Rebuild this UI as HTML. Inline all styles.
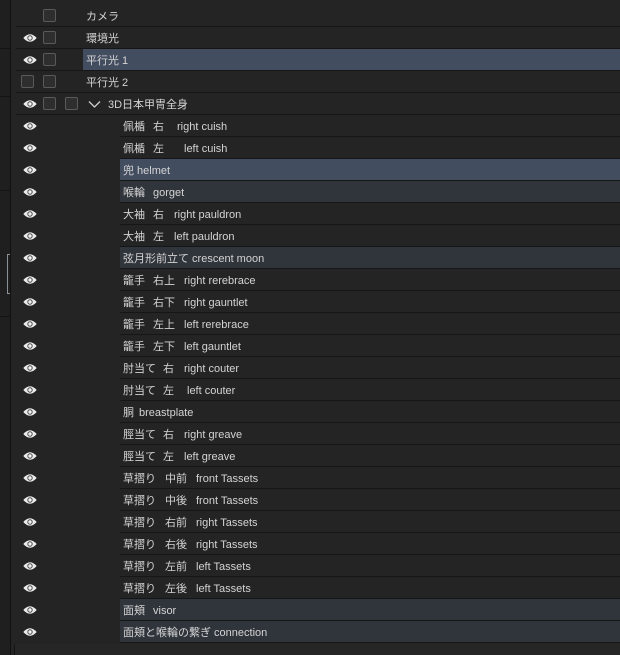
<!DOCTYPE html>
<html><head><meta charset="utf-8"><style>
*{margin:0;padding:0;box-sizing:border-box}
body{width:620px;height:655px;background:#242424;position:relative;overflow:hidden;font-family:"Liberation Sans","Noto Sans CJK JP",sans-serif;font-size:11px;color:#d4d4d4}
.strip{position:absolute;left:0;top:0;width:11px;height:655px;background:#1f1f1f;border-right:1px solid #111}
.r{position:absolute;left:0;right:0;height:22px}
.ln{position:absolute;left:120px;right:0;top:0;height:22px;border-bottom:1px solid #161616}
.tl{left:16px}
.sel{background:#434d60}
.sec{background:#30343b}
.t{position:absolute;top:1px;line-height:22px;white-space:nowrap}
.cb{position:absolute;top:4px;width:13px;height:13px;border:1px solid #5a5a5a;background:#2e2e2e;border-radius:2px}
.eye{position:absolute;left:23px;top:6px;width:14px;height:10px}
</style></head><body>
<svg width="0" height="0" style="position:absolute"><defs><g id="e"><path d="M0.3 5 Q7 -2.5 13.7 5 Q7 12.5 0.3 5Z" fill="#ececec"/><circle cx="7" cy="5" r="2.7" fill="#4a4a4a"/><circle cx="7" cy="5" r="1.7" fill="#f0f0f0"/></g></defs></svg>
<div class="strip"></div>
<div style="position:absolute;left:0;top:48px;width:10px;border-top:1px solid #141414"></div>
<div style="position:absolute;left:0;top:96px;width:10px;border-top:1px solid #141414"></div>
<div style="position:absolute;left:0;top:190px;width:10px;border-top:1px solid #141414"></div>
<div style="position:absolute;left:0;top:316px;width:10px;border-top:1px solid #141414"></div>
<div style="position:absolute;left:7px;top:254px;width:3px;height:40px;border:1px solid #8a8f99;border-right:none"></div>

<div class="r" style="top:5px"><div class="ln tl"></div><div class="cb" style="left:43px"></div><span class="t" style="left:86px">カメラ</span></div>
<div class="r" style="top:27px"><div class="ln tl"></div><svg class="eye" viewBox="0 0 14 10"><use href="#e"/></svg><div class="cb" style="left:43px"></div><span class="t" style="left:86px">環境光</span></div>
<div class="r" style="top:49px"><div class="ln tl"></div><div class="ln sel" style="left:83px"></div><svg class="eye" viewBox="0 0 14 10"><use href="#e"/></svg><div class="cb" style="left:43px"></div><span class="t" style="left:86px">平行光 1</span></div>
<div class="r" style="top:71px"><div class="ln tl"></div><div class="cb" style="left:21px"></div><div class="cb" style="left:43px"></div><span class="t" style="left:86px">平行光 2</span></div>
<div class="r" style="top:93px"><div class="ln tl"></div><svg class="eye" viewBox="0 0 14 10"><use href="#e"/></svg><div class="cb" style="left:43px"></div><div class="cb" style="left:65px"></div><svg style="position:absolute;left:88px;top:7px" width="13" height="9" viewBox="0 0 13 9"><path d="M1 1.5 L6.5 7 L12 1.5" fill="none" stroke="#cfcfcf" stroke-width="1.3"/></svg><span class="t" style="left:108px">3D日本甲冑全身</span></div>

<div class="r" style="top:115px"><div class="ln"></div><svg class="eye" viewBox="0 0 14 10"><use href="#e"/></svg><span class="t" style="left:123px">佩楯</span><span class="t" style="left:153px">右</span><span class="t" style="left:177px">right cuish</span></div>
<div class="r" style="top:137px"><div class="ln"></div><svg class="eye" viewBox="0 0 14 10"><use href="#e"/></svg><span class="t" style="left:123px">佩楯</span><span class="t" style="left:153px">左</span><span class="t" style="left:184px">left cuish</span></div>
<div class="r" style="top:159px"><div class="ln sel"></div><svg class="eye" viewBox="0 0 14 10"><use href="#e"/></svg><span class="t" style="left:123px">兜 helmet</span></div>
<div class="r" style="top:181px"><div class="ln sec"></div><svg class="eye" viewBox="0 0 14 10"><use href="#e"/></svg><span class="t" style="left:123px">喉輪</span><span class="t" style="left:153px">gorget</span></div>
<div class="r" style="top:203px"><div class="ln"></div><svg class="eye" viewBox="0 0 14 10"><use href="#e"/></svg><span class="t" style="left:123px">大袖</span><span class="t" style="left:153px">右</span><span class="t" style="left:174px">right pauldron</span></div>
<div class="r" style="top:225px"><div class="ln"></div><svg class="eye" viewBox="0 0 14 10"><use href="#e"/></svg><span class="t" style="left:123px">大袖</span><span class="t" style="left:153px">左</span><span class="t" style="left:174px">left pauldron</span></div>
<div class="r" style="top:247px"><div class="ln sec"></div><svg class="eye" viewBox="0 0 14 10"><use href="#e"/></svg><span class="t" style="left:123px">弦月形前立て crescent moon</span></div>
<div class="r" style="top:269px"><div class="ln"></div><svg class="eye" viewBox="0 0 14 10"><use href="#e"/></svg><span class="t" style="left:123px">籠手</span><span class="t" style="left:153px">右上</span><span class="t" style="left:184px">right rerebrace</span></div>
<div class="r" style="top:291px"><div class="ln"></div><svg class="eye" viewBox="0 0 14 10"><use href="#e"/></svg><span class="t" style="left:123px">籠手</span><span class="t" style="left:153px">右下</span><span class="t" style="left:184px">right gauntlet</span></div>
<div class="r" style="top:313px"><div class="ln"></div><svg class="eye" viewBox="0 0 14 10"><use href="#e"/></svg><span class="t" style="left:123px">籠手</span><span class="t" style="left:153px">左上</span><span class="t" style="left:184px">left rerebrace</span></div>
<div class="r" style="top:335px"><div class="ln"></div><svg class="eye" viewBox="0 0 14 10"><use href="#e"/></svg><span class="t" style="left:123px">籠手</span><span class="t" style="left:153px">左下</span><span class="t" style="left:184px">left gauntlet</span></div>
<div class="r" style="top:357px"><div class="ln"></div><svg class="eye" viewBox="0 0 14 10"><use href="#e"/></svg><span class="t" style="left:123px">肘当て</span><span class="t" style="left:163px">右</span><span class="t" style="left:184px">right couter</span></div>
<div class="r" style="top:379px"><div class="ln"></div><svg class="eye" viewBox="0 0 14 10"><use href="#e"/></svg><span class="t" style="left:123px">肘当て</span><span class="t" style="left:163px">左</span><span class="t" style="left:187px">left couter</span></div>
<div class="r" style="top:401px"><div class="ln"></div><svg class="eye" viewBox="0 0 14 10"><use href="#e"/></svg><span class="t" style="left:123px">胴</span><span class="t" style="left:139px">breastplate</span></div>
<div class="r" style="top:423px"><div class="ln"></div><svg class="eye" viewBox="0 0 14 10"><use href="#e"/></svg><span class="t" style="left:123px">脛当て</span><span class="t" style="left:163px">右</span><span class="t" style="left:184px">right greave</span></div>
<div class="r" style="top:445px"><div class="ln"></div><svg class="eye" viewBox="0 0 14 10"><use href="#e"/></svg><span class="t" style="left:123px">脛当て</span><span class="t" style="left:163px">左</span><span class="t" style="left:184px">left greave</span></div>
<div class="r" style="top:467px"><div class="ln"></div><svg class="eye" viewBox="0 0 14 10"><use href="#e"/></svg><span class="t" style="left:123px">草摺り</span><span class="t" style="left:165px">中前</span><span class="t" style="left:196px">front Tassets</span></div>
<div class="r" style="top:489px"><div class="ln"></div><svg class="eye" viewBox="0 0 14 10"><use href="#e"/></svg><span class="t" style="left:123px">草摺り</span><span class="t" style="left:165px">中後</span><span class="t" style="left:196px">front Tassets</span></div>
<div class="r" style="top:511px"><div class="ln"></div><svg class="eye" viewBox="0 0 14 10"><use href="#e"/></svg><span class="t" style="left:123px">草摺り</span><span class="t" style="left:165px">右前</span><span class="t" style="left:196px">right Tassets</span></div>
<div class="r" style="top:533px"><div class="ln"></div><svg class="eye" viewBox="0 0 14 10"><use href="#e"/></svg><span class="t" style="left:123px">草摺り</span><span class="t" style="left:165px">右後</span><span class="t" style="left:196px">right Tassets</span></div>
<div class="r" style="top:555px"><div class="ln"></div><svg class="eye" viewBox="0 0 14 10"><use href="#e"/></svg><span class="t" style="left:123px">草摺り</span><span class="t" style="left:165px">左前</span><span class="t" style="left:196px">left Tassets</span></div>
<div class="r" style="top:577px"><div class="ln"></div><svg class="eye" viewBox="0 0 14 10"><use href="#e"/></svg><span class="t" style="left:123px">草摺り</span><span class="t" style="left:165px">左後</span><span class="t" style="left:196px">left Tassets</span></div>
<div class="r" style="top:599px"><div class="ln sec"></div><svg class="eye" viewBox="0 0 14 10"><use href="#e"/></svg><span class="t" style="left:123px">面頬</span><span class="t" style="left:153px">visor</span></div>
<div class="r" style="top:621px"><div class="ln sec"></div><svg class="eye" viewBox="0 0 14 10"><use href="#e"/></svg><span class="t" style="left:123px">面頬と喉輪の繋ぎ connection</span></div>

<div style="position:absolute;left:14px;top:644px;width:606px;height:11px;background:#262626;border-left:1px solid #151515"></div>
</body></html>
